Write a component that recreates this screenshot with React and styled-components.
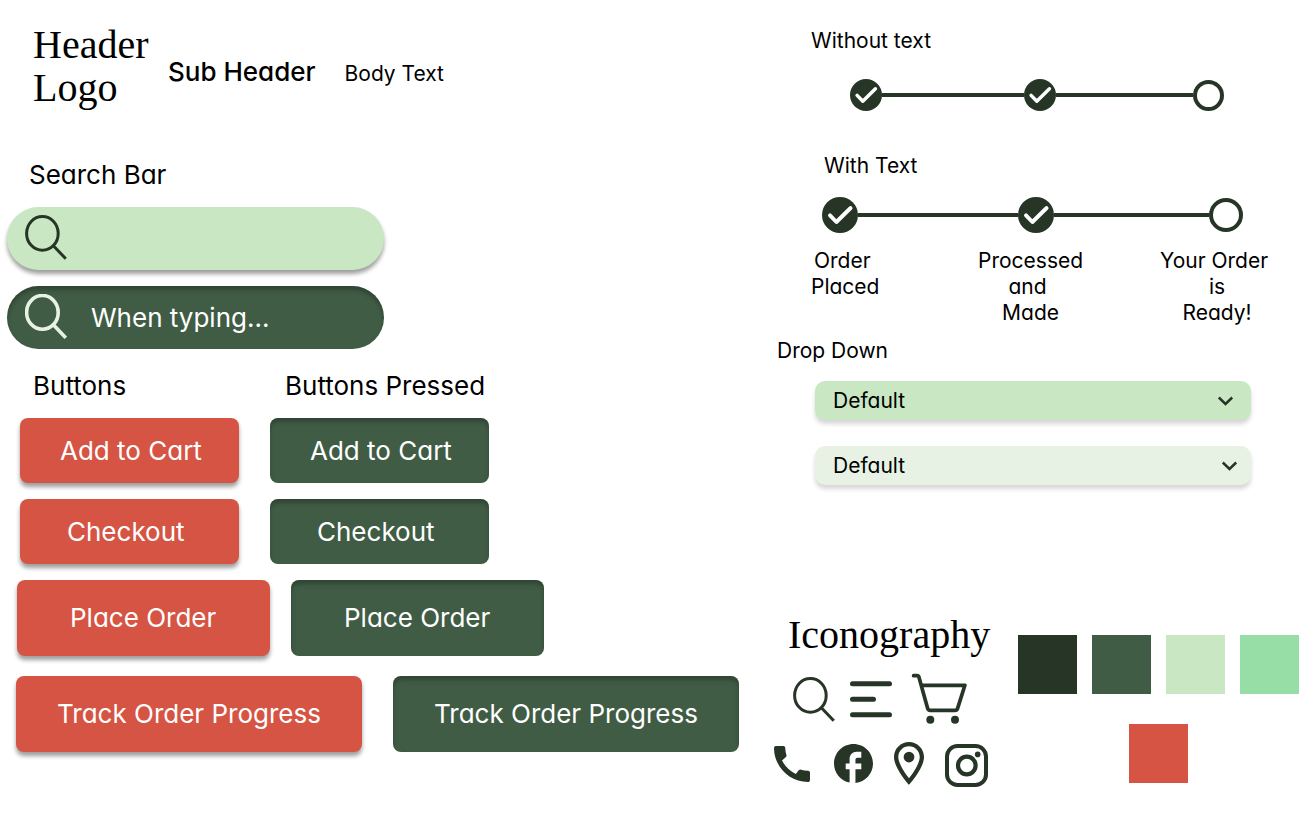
import React from "react";
import styled, { createGlobalStyle, ThemeProvider } from "styled-components";

const theme = {
  ink: "#000000",
  dark: "#273526",
  green: "#405c45",
  light: "#c9e7c2",
  pale: "#e7f2e4",
  mint: "#97dda6",
  red: "#d65443",
  body: 'Inter, "Open Sans", sans-serif',
  display: '"Liberation Serif", serif',
};

const GlobalStyle = createGlobalStyle`
  *, *::before, *::after { box-sizing: border-box; }
  body {
    margin: 0;
    background: #ffffff;
    color: ${theme.ink};
    font-family: ${theme.body};
    font-feature-settings: "cv11";
  }
  h1, h2, h3, p, ol, ul { margin: 0; padding: 0; font-weight: 400; }
  ol, ul { list-style: none; }
  button, input, select { font: inherit; font-feature-settings: inherit; border: 0; margin: 0; }
  svg { display: block; flex: none; }
`;

const Page = styled.main`
  display: grid;
  grid-template-columns: minmax(744px, 774fr) minmax(527px, 527fr);
  min-height: 100vh;
`;

const Column = styled.div`
  display: flex;
  flex-direction: column;
  min-width: 0;
`;

const Display = styled.h1`
  font-family: ${(p) => p.theme.display};
  font-size: 40px;
  line-height: 43px;
`;

const SectionTitle = styled.h2`
  font-size: 26px;
  line-height: 32px;
`;

const GroupTitle = styled.h3`
  font-size: 21px;
  line-height: 26px;
  padding-left: ${(p) => p.$inset}px;
`;

/* Typography samples */
const TypeRow = styled.header`
  display: flex;
  padding: 23px 0 0 33px;
`;

const LogoText = styled(Display)`
  width: 135px;
`;

const TypeSamples = styled.div`
  display: flex;
  align-items: baseline;
  gap: 29px;
  padding-top: 33px;
`;

const SubHeader = styled(SectionTitle)`
  font-weight: 500;
  white-space: nowrap;
`;

const BodyText = styled.p`
  font-size: 21px;
  line-height: 32px;
`;

/* Search bars */
const SearchSection = styled.section`
  display: flex;
  flex-direction: column;
  gap: 16px;
  padding: 50px 7px 0;
`;

const SearchLabel = styled.label`
  padding-left: 22px;
  font-size: 26px;
  line-height: 32px;
`;

const SearchBar = styled.div`
  display: flex;
  align-items: center;
  gap: 24px;
  width: 377px;
  height: 63px;
  padding: 0 24px 3px 18px;
  border-radius: 32px;
  color: ${(p) => (p.$typing ? p.theme.pale : p.theme.dark)};
  background: ${(p) => (p.$typing ? p.theme.green : p.theme.light)};
  box-shadow: ${(p) =>
    p.$typing ? "inset 0 4px 4px rgba(0, 0, 0, 0.25)" : "0 4px 4px rgba(0, 0, 0, 0.38)"};
`;

const SearchInput = styled.input`
  flex: 1;
  min-width: 0;
  padding: 3px 0 0;
  background: transparent;
  color: #ffffff;
  font-size: 26px;
  line-height: 32px;
  outline: none;
`;

/* Buttons */
const ButtonSection = styled.section`
  display: flex;
  flex-direction: column;
  gap: 16px;
  padding-top: 21px;
`;

const ButtonTitles = styled.div`
  display: grid;
  grid-template-columns: 252px auto;
  padding-left: 33px;
`;

const ButtonRow = styled.div`
  display: flex;
  gap: ${(p) => p.$gap}px;
  padding-left: ${(p) => p.$inset}px;
`;

const TallRows = styled.div`
  display: flex;
  flex-direction: column;
  gap: 20px;
`;

const Button = styled.button`
  width: ${(p) => p.$width}px;
  height: ${(p) => (p.$tall ? 76 : 65)}px;
  padding: 0 0 0 ${(p) => p.$pad}px;
  border-radius: 8px;
  color: #ffffff;
  font-size: 26px;
  line-height: 32px;
  text-align: left;
  white-space: nowrap;
  cursor: pointer;
  background: ${(p) => (p.$pressed ? p.theme.green : p.theme.red)};
  box-shadow: ${(p) =>
    p.$pressed ? "inset 0 4px 4px rgba(0, 0, 0, 0.25)" : "0 4px 4px rgba(0, 0, 0, 0.38)"};
`;

/* Progress trackers */
const TrackerSection = styled.section`
  padding-top: ${(p) => p.$top}px;
`;

const Track = styled.div`
  display: flex;
  align-items: center;
  margin: ${(p) => p.$margin};
`;

const Connector = styled.span`
  flex: ${(p) => p.$grow} 1 0;
  height: 4px;
  background: ${(p) => p.theme.dark};
`;

const OpenStep = styled.span`
  flex: none;
  width: ${(p) => p.$size}px;
  height: ${(p) => p.$size}px;
  border: 4px solid ${(p) => p.theme.dark};
  border-radius: 50%;
`;

const StepLabels = styled.ol`
  display: grid;
  grid-template-columns: 167fr 182fr 141fr;
  padding: 15px 0 0 37px;
`;

const StepLabel = styled.li`
  width: max-content;
  font-size: 21px;
  line-height: 26px;
  text-align: center;
  white-space: pre;
`;

/* Drop downs */
const DropSection = styled.section`
  padding-top: 12px;
`;

const DropList = styled.div`
  display: flex;
  flex-direction: column;
  gap: 26px;
  padding: 17px 50px 0 41px;
`;

const SelectBox = styled.div`
  position: relative;
  color: ${(p) => p.theme.dark};
`;

const Select = styled.select`
  appearance: none;
  display: block;
  width: 100%;
  height: 39px;
  padding: 0 48px 0 18px;
  border-radius: 10px;
  color: ${(p) => p.theme.ink};
  font-size: 21px;
  line-height: 26px;
  background: ${(p) => (p.$pale ? p.theme.pale : p.theme.light)};
  box-shadow: 0 4px 4px rgba(0, 0, 0, 0.16);
`;

const Chevron = styled.svg`
  position: absolute;
  top: 15px;
  right: ${(p) => (p.$pale ? 13 : 17)}px;
  pointer-events: none;
`;

/* Icons and palette */
const Assets = styled.section`
  display: flex;
  justify-content: space-between;
  padding: 128px 2px 0 0;
  color: ${(p) => p.theme.dark};
`;

const IconTitle = styled(Display)`
  padding-left: 14px;
  color: ${(p) => p.theme.ink};
`;

const IconRow = styled.div`
  display: flex;
  align-items: center;
  gap: ${(p) => p.$gap}px;
  padding: ${(p) => p.$padding};
`;

const Palette = styled.ul`
  display: flex;
  flex-wrap: wrap;
  justify-content: center;
  align-content: flex-start;
  gap: 30px 15px;
  width: 281px;
  padding-top: 22px;
`;

const Swatch = styled.li`
  width: 59px;
  height: 59px;
  background: ${(p) => p.$color};
`;

const SearchIcon = ({ stroke = 3 }) => (
  <svg width="42" height="45" viewBox="0 0 42 45" fill="none" stroke="currentColor" strokeWidth={stroke} aria-hidden="true">
    <ellipse cx="17.4" cy="18.4" rx="15.8" ry="16.9" />
    <path d="M28.6 31 40.8 43.8" />
  </svg>
);

const CheckedStep = ({ size }) => (
  <svg width={size} height={size} viewBox="0 0 36 36" aria-hidden="true">
    <circle cx="18" cy="18" r="18" fill={theme.dark} />
    <path d="M8 18.4 14.4 25 28.6 11" fill="none" stroke="#fff" strokeWidth="3.9" strokeLinecap="round" strokeLinejoin="round" />
  </svg>
);

const MenuIcon = () => (
  <svg width="42" height="37" viewBox="0 0 42 37" fill="none" stroke="currentColor" strokeWidth="5" strokeLinecap="round" aria-hidden="true">
    <path d="M2.5 2.7H39.5M2.5 18.2H23.5M2.5 33.7H39.5" />
  </svg>
);

const CartIcon = () => (
  <svg width="60" height="52" viewBox="-4 0 60 52" aria-hidden="true">
    <path
      d="M2.6 2.7H6.1Q7.5 2.7 7.9 4.1L16.6 35.3Q17.2 37.3 19.2 37.3H44Q46 37.3 46.6 35.4L53.9 12.3H10.3"
      fill="none"
      stroke="currentColor"
      strokeWidth="3.7"
      strokeLinecap="round"
      strokeLinejoin="round"
    />
    <circle cx="19.3" cy="46.7" r="4" fill="currentColor" />
    <circle cx="44" cy="46.7" r="4" fill="currentColor" />
  </svg>
);

const PhoneIcon = () => (
  <svg width="39" height="36" viewBox="3 3 19.5 18" fill="currentColor" aria-hidden="true">
    <path d="M20.01 15.38c-1.23 0-2.42-.2-3.53-.56-.35-.12-.74-.03-1.01.24l-1.57 1.97c-2.83-1.35-5.48-3.9-6.89-6.83l1.95-1.66c.27-.28.35-.67.24-1.02-.37-1.11-.56-2.3-.56-3.53 0-.54-.45-.99-.99-.99H4.19C3.65 3 3 3.24 3 3.99 3 13.28 10.73 21 20.01 21c.71 0 .99-.63.99-1.18v-3.45c0-.54-.45-.99-.99-.99z" />
  </svg>
);

const FacebookIcon = () => (
  <svg width="39" height="39" viewBox="2 2 20 20" fill="currentColor" aria-hidden="true">
    <path d="M22 12c0-5.52-4.48-10-10-10S2 6.48 2 12c0 4.84 3.44 8.87 8 9.8V15H8v-3h2V9.5C10 7.57 11.57 6 13.5 6H16v3h-2c-.55 0-1 .45-1 1v2h3v3h-3v6.95c5.05-.5 9-4.76 9-9.95z" />
  </svg>
);

const PinIcon = () => (
  <svg width="30" height="43" viewBox="5 2 14 20" fill="currentColor" aria-hidden="true">
    <path d="M12 2C8.13 2 5 5.13 5 9c0 5.25 7 13 7 13s7-7.75 7-13c0-3.87-3.13-7-7-7zM7 9c0-2.76 2.24-5 5-5s5 2.24 5 5c0 2.88-2.88 7.19-5 9.88C9.92 16.21 7 11.85 7 9z" />
    <circle cx="12" cy="9" r="2.5" />
  </svg>
);

const InstagramIcon = () => (
  <svg width="43" height="47" viewBox="0 -4 43 47" fill="none" stroke="currentColor" strokeWidth="4" aria-hidden="true">
    <rect x="2" y="2" width="39" height="39" rx="10.5" />
    <circle cx="21.8" cy="21.5" r="8.8" strokeWidth="4.2" />
    <circle cx="32.7" cy="10.4" r="2.8" fill="currentColor" stroke="none" />
  </svg>
);

const DropDown = ({ label, pale }) => (
  <SelectBox>
    <Select $pale={pale} aria-label={label} defaultValue="Default">
      <option>Default</option>
    </Select>
    <Chevron $pale={pale} width="17" height="11" viewBox="0 0 17 11" fill="none" stroke="currentColor" strokeWidth="2.5" aria-hidden="true">
      <path d="M1.8 1.5 8.5 8 15.2 1.5" />
    </Chevron>
  </SelectBox>
);

const ButtonPair = ({ text, width, pad, gap, inset, tall }) => (
  <ButtonRow $gap={gap} $inset={inset}>
    <Button type="button" $width={width} $pad={pad} $tall={tall}>
      {text}
    </Button>
    <Button type="button" aria-pressed="true" $pressed $width={width} $pad={pad} $tall={tall}>
      {text}
    </Button>
  </ButtonRow>
);

const palette = [theme.dark, theme.green, theme.light, theme.mint, theme.red];

export default function App() {
  return (
    <ThemeProvider theme={theme}>
      <GlobalStyle />
      <Page>
        <Column>
          <TypeRow>
            <LogoText>
              Header
              <br />
              Logo
            </LogoText>
            <TypeSamples>
              <SubHeader>Sub Header</SubHeader>
              <BodyText>Body Text</BodyText>
            </TypeSamples>
          </TypeRow>

          <SearchSection>
            <SearchLabel htmlFor="search">Search Bar</SearchLabel>
            <SearchBar>
              <SearchIcon />
              <SearchInput id="search" type="text" />
            </SearchBar>
            <SearchBar $typing>
              <SearchIcon stroke={3.6} />
              <SearchInput type="text" aria-label="Search" defaultValue="When typing..." />
            </SearchBar>
          </SearchSection>

          <ButtonSection>
            <ButtonTitles>
              <SectionTitle>Buttons</SectionTitle>
              <SectionTitle>Buttons Pressed</SectionTitle>
            </ButtonTitles>
            <ButtonPair text="Add to Cart" width={219} pad={40} gap={31} inset={20} />
            <ButtonPair text="Checkout" width={219} pad={47} gap={31} inset={20} />
            <TallRows>
              <ButtonPair text="Place Order" width={253} pad={53} gap={21} inset={17} tall />
              <ButtonPair text="Track Order Progress" width={346} pad={41} gap={31} inset={16} tall />
            </TallRows>
          </ButtonSection>
        </Column>

        <Column>
          <TrackerSection $top={28}>
            <GroupTitle $inset={37}>Without text</GroupTitle>
            <Track $margin="25px 77px 0 76px">
              <CheckedStep size={32} />
              <Connector $grow={142} />
              <CheckedStep size={32} />
              <Connector $grow={138} />
              <OpenStep $size={31} />
            </Track>
          </TrackerSection>

          <TrackerSection $top={42}>
            <GroupTitle $inset={50}>With Text</GroupTitle>
            <Track $margin="18px 58px 0 48px">
              <CheckedStep size={36} />
              <Connector $grow={160} />
              <CheckedStep size={36} />
              <Connector $grow={156} />
              <OpenStep $size={34} />
            </Track>
            <StepLabels>
              <StepLabel>{"Order \nPlaced"}</StepLabel>
              <StepLabel>{"Processed\nand \nMade"}</StepLabel>
              <StepLabel>{"Your Order\n is\n Ready!"}</StepLabel>
            </StepLabels>
          </TrackerSection>

          <DropSection>
            <GroupTitle $inset={3}>Drop Down</GroupTitle>
            <DropList>
              <DropDown label="Drop Down" />
              <DropDown label="Drop Down, light" pale />
            </DropList>
          </DropSection>

          <Assets>
            <div>
              <IconTitle as="h2">Iconography</IconTitle>
              <IconRow $gap={15} $padding="17px 0 0 19px">
                <SearchIcon />
                <MenuIcon />
                <CartIcon />
              </IconRow>
              <IconRow $gap={21} $padding="15px 0 0">
                <PhoneIcon />
                <FacebookIcon />
                <PinIcon />
                <InstagramIcon />
              </IconRow>
            </div>
            <Palette>
              {palette.map((color) => (
                <Swatch key={color} $color={color} />
              ))}
            </Palette>
          </Assets>
        </Column>
      </Page>
    </ThemeProvider>
  );
}
